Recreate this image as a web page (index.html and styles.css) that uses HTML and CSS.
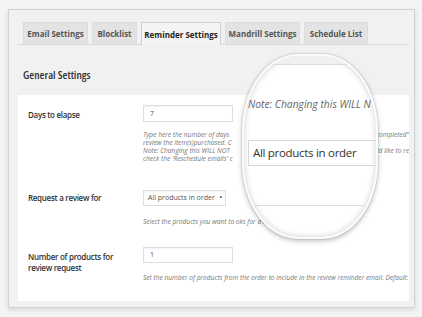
FILE: index.html
```html
<!DOCTYPE html>
<html lang="en">
<head>
<meta charset="utf-8">
<title>Reminder Settings</title>
<link rel="stylesheet" href="styles.css">
</head>
<body>
<div class="panel">
  <nav class="tabs">
    <a class="tab">Email Settings</a>
    <a class="tab">Blocklist</a>
    <a class="tab tab--active">Reminder Settings</a>
    <a class="tab">Mandrill Settings</a>
    <a class="tab">Schedule List</a>
  </nav>
  <h2 class="section-title">General Settings</h2>
  <div class="form-box">
    <div class="row row--first">
      <div class="label">Days to elapse</div>
      <div class="field">
        <div class="input input--wide">7</div>
        <div class="desc desc--first">
          <div class="line"><span class="lead">Type here the number of days</span><span class="tail"><span>&quot;completed&quot;</span></span></div>
          <div class="line"><span class="lead">review the item(s)purchased. C</span></div>
          <div class="line"><span class="lead">Note: Changing this WILL NOT</span><span class="tail"><span>uld like to re</span></span></div>
          <div class="line"><span class="lead">check the 'Reschedule emails' c</span></div>
        </div>
      </div>
    </div>
    <div class="row row--second">
      <div class="label">Request a review for</div>
      <div class="field">
        <div class="input select">All products in order <span class="arrow">&#8226;</span></div>
        <div class="desc desc--second"><div class="line"><span class="lead">Select the products you want to oks for a r</span></div></div>
      </div>
    </div>
    <div class="row row--third">
      <div class="label">Number of products for<br>review request</div>
      <div class="field">
        <div class="input input--wide">1</div>
        <div class="desc desc--third"><div class="line"><span class="lead">Set the number of products from the order to include in the review reminder email. Default:</span></div></div>
      </div>
    </div>
  </div>
  <div class="magnifier">
    <div class="mag-top"></div>
    <div class="mag-note">Note: Changing this WILL N</div>
    <div class="mag-select">All products in order</div>
    <div class="mag-line"></div>
  </div>
</div>
</body>
</html>
```

FILE: styles.css
```css
* { box-sizing: border-box; }
html, body { margin: 0; padding: 0; }
body {
  background: #f4f4f4;
  font-family: "Open Sans", "DejaVu Sans", sans-serif;
  color: #333;
  width: 422px;
  height: 317px;
  overflow: hidden;
}
.panel {
  position: relative;
  margin: 9px 7px 0 8px;
  width: 407px;
  height: 299px;
  background: #f1f1f1;
  border: 1px solid #d2d2d2;
  box-shadow: 0 2px 5px rgba(0,0,0,0.12);
  padding: 12px 5px 6px 9px;
  display: flex;
  flex-direction: column;
}
.tabs {
  display: flex;
  gap: 4px;
  padding-left: 5px;
  border-bottom: 1px solid #d8d8d8;
  height: 23px;
}
.tab {
  height: 22px;
  padding: 0 3px;
  display: flex;
  align-items: center;
  justify-content: center;
  background: #e3e3e3;
  border: 1px solid #dcdcdc;
  border-bottom: none;
  font-size: 8px;
  font-weight: 700;
  color: #555;
  white-space: nowrap;
}
.tab:nth-child(1) { width: 65px; }
.tab:nth-child(2) { width: 45px; }
.tab:nth-child(3) { width: 80px; }
.tab:nth-child(4) { width: 75px; }
.tab:nth-child(5) { width: 64px; }
.tab--active {
  background: #f4f4f4;
  border-color: #d0d0d0;
  color: #1e1e1e;
  height: 23px;
}
.section-title {
  margin: 0;
  padding: 23px 0 0 5px;
  height: 50px;
  font-size: 11.3px;
  font-stretch: 75%;
  font-weight: 600;
  color: #333;
  line-height: 14px;
}
.form-box {
  flex: 1;
  background: #fff;
  overflow: hidden;
}
.row {
  display: flex;
  padding-top: 10px;
}
.row--first { padding-bottom: 17px; }
.row--second { padding-bottom: 11px; }
.label {
  width: 125px;
  flex: none;
  padding: 4px 0 0 10px;
  font-size: 8px;
  letter-spacing: -0.3px;
  font-weight: 600;
  line-height: 11px;
  color: #333;
}
.row--second .label { padding-top: 2px; }
.field {
  flex: 1;
  min-width: 0;
}
.input {
  height: 17px;
  border: 1px solid #dedede;
  box-shadow: inset 0 1px 2px rgba(0,0,0,0.05);
  background: #fff;
  font-size: 7px;
  line-height: 15px;
  padding-left: 6px;
  color: #555;
}
.input--wide { width: 90px; }
.select { width: 83px; height: 16px; line-height: 14px; padding-left: 4px; white-space: nowrap; }
.arrow { color: #222; margin-left: 3px; font-size: 7px; }
.row--third .input { height: 16px; line-height: 14px; }
.desc {
  font-size: 6.6px;
  font-style: italic;
  color: #777;
  line-height: 8px;
}
.desc--first { margin-top: 9px; }
.desc--second { margin-top: 12px; }
.desc--third { margin-top: 11px; }
.line {
  display: flex;
  justify-content: space-between;
  white-space: nowrap;
  height: 8px;
}
.lead {
  overflow: hidden;
}
.tail {
  flex: none;
  width: 32px;
  overflow: hidden;
  display: flex;
  justify-content: flex-end;
}
.tail > span { flex: none; }
.magnifier {
  position: absolute;
  left: 233px;
  top: 44px;
  width: 136px;
  height: 185px;
  border-radius: 56px / 76px;
  background: #fff;
  border: 2px solid #fbfbfb;
  box-shadow: 0 0 0 1px rgba(0,0,0,0.07), 0 2px 5px rgba(0,0,0,0.25), inset 0 0 6px rgba(0,0,0,0.2);
  overflow: hidden;
}
.mag-top {
  height: 9px;
  background: #f0f0f0;
  border-bottom: 1px solid #dadada;
}
.mag-note {
  margin-top: 32px;
  padding-left: 4px;
  font-size: 10.3px;
  font-style: italic;
  color: #666;
  white-space: nowrap;
  line-height: 14px;
}
.mag-select {
  margin-top: 29px;
  margin-left: 4px;
  width: 160px;
  height: 26px;
  border: 1px solid #d8d8d8;
  font-size: 11.5px;
  letter-spacing: -0.3px;
  line-height: 24px;
  padding-left: 4px;
  color: #333;
  white-space: nowrap;
}
.mag-line {
  margin-top: 39px;
  height: 1px;
  background: #dcdcdc;
}
```
